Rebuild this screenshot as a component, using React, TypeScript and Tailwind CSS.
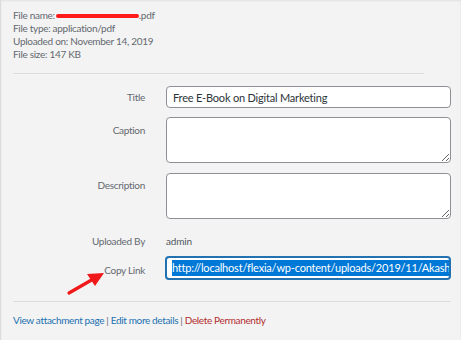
import React from 'react';

const font = { fontFamily: 'Lato, "Open Sans", "Noto Sans", sans-serif' };

function Label({ children, className = '' }: { children: React.ReactNode; className?: string }) {
    return (
        <div className={`w-[131px] shrink-0 text-right text-[10px] tracking-[-0.3px] text-[#646970] ${className}`}>
            {children}
        </div>
    );
}

export default function App() {
    return (
        <div
            className="relative w-[461px] h-[340px] overflow-hidden bg-[#f3f3f3] border-l border-[#dcdcde] shadow-[inset_0_1px_2px_rgba(0,0,0,0.08)]"
            style={font}
        >
            {/* File meta */}
            <div className="pl-[12px] pt-[9px] text-[10px] leading-[13px] tracking-[-0.3px] text-[#646970]">
                <div className="flex items-center whitespace-nowrap">
                    <span>File name:</span>
                    <span className="relative ml-[1px] inline-block h-[13px] w-[83px] overflow-hidden">
                        <span className="absolute left-0 top-[5px] h-[4px] w-[83px] rounded-full bg-[#ff1a1a]" />
                    </span>
                    <span>.pdf</span>
                </div>
                <div>File type: application/pdf</div>
                <div>Uploaded on: November 14, 2019</div>
                <div>File size: 147 KB</div>
            </div>

            <div className="ml-[12px] mt-[12px] h-px w-[411px] bg-[#dcdcde]" />

            {/* Attachment fields */}
            <div className="mt-[12px] flex flex-col pl-[13px]">
                <div className="flex items-start gap-[21px]">
                    <Label className="leading-[22px]">Title</Label>
                    <input
                        readOnly
                        value="Free E-Book on Digital Marketing"
                        className="h-[22px] w-[285px] rounded-[4px] border border-[#8c8f94] bg-white px-[6px] text-[11px] tracking-[-0.2px] text-[#2c3338] outline-none"
                        style={font}
                    />
                </div>

                <div className="mt-[9px] flex items-start gap-[21px]">
                    <Label className="leading-[26px]">Caption</Label>
                    <textarea
                        readOnly
                        className="h-[46px] w-[285px] rounded-[4px] border border-[#8c8f94] bg-white outline-none"
                    />
                </div>

                <div className="mt-[10px] flex items-start gap-[21px]">
                    <Label className="leading-[24px]">Description</Label>
                    <textarea
                        readOnly
                        className="h-[46px] w-[285px] rounded-[4px] border border-[#8c8f94] bg-white outline-none"
                    />
                </div>

                <div className="mt-[12px] flex h-[20px] items-center gap-[21px]">
                    <Label>Uploaded By</Label>
                    <div className="text-[10px] tracking-[-0.2px] text-[#50575e]">admin</div>
                </div>

                <div className="mt-[5px] flex items-start gap-[20px]">
                    <Label className="leading-[28px]">Copy Link</Label>
                    <div className="flex h-[24px] w-[286px] items-center overflow-hidden rounded-[4px] border-2 border-[#2271b1] bg-white pl-[5px]">
                        <span className="whitespace-nowrap bg-[#0078d7] text-[11px] leading-[16px] tracking-[-0.2px] text-white">
                            http://localhost/flexia/wp-content/uploads/2019/11/Akash-Ebook.pdf
                        </span>
                    </div>
                </div>
            </div>

            <div className="ml-[12px] mt-[17px] h-px w-[438px] bg-[#dcdcde]" />

            {/* Actions */}
            <div className="whitespace-nowrap pl-[12px] pt-[11px] text-[10px] leading-[14px] tracking-[-0.35px] text-[#646970]">
                <a className="text-[#2271b1]">View attachment page</a>
                {' | '}
                <a className="text-[#2271b1]">Edit more details</a>
                {' | '}
                <a className="text-[#b32d2e]">Delete Permanently</a>
            </div>

            {/* Annotation arrow */}
            <svg className="absolute left-[60px] top-[268px]" width="50" height="32" viewBox="0 0 50 32">
                <line x1="8" y1="25" x2="34" y2="10" stroke="#f01818" strokeWidth="3.2" strokeLinecap="round" />
                <polygon points="43,5 26,6 34,18" fill="#f01818" />
            </svg>
        </div>
    );
}
